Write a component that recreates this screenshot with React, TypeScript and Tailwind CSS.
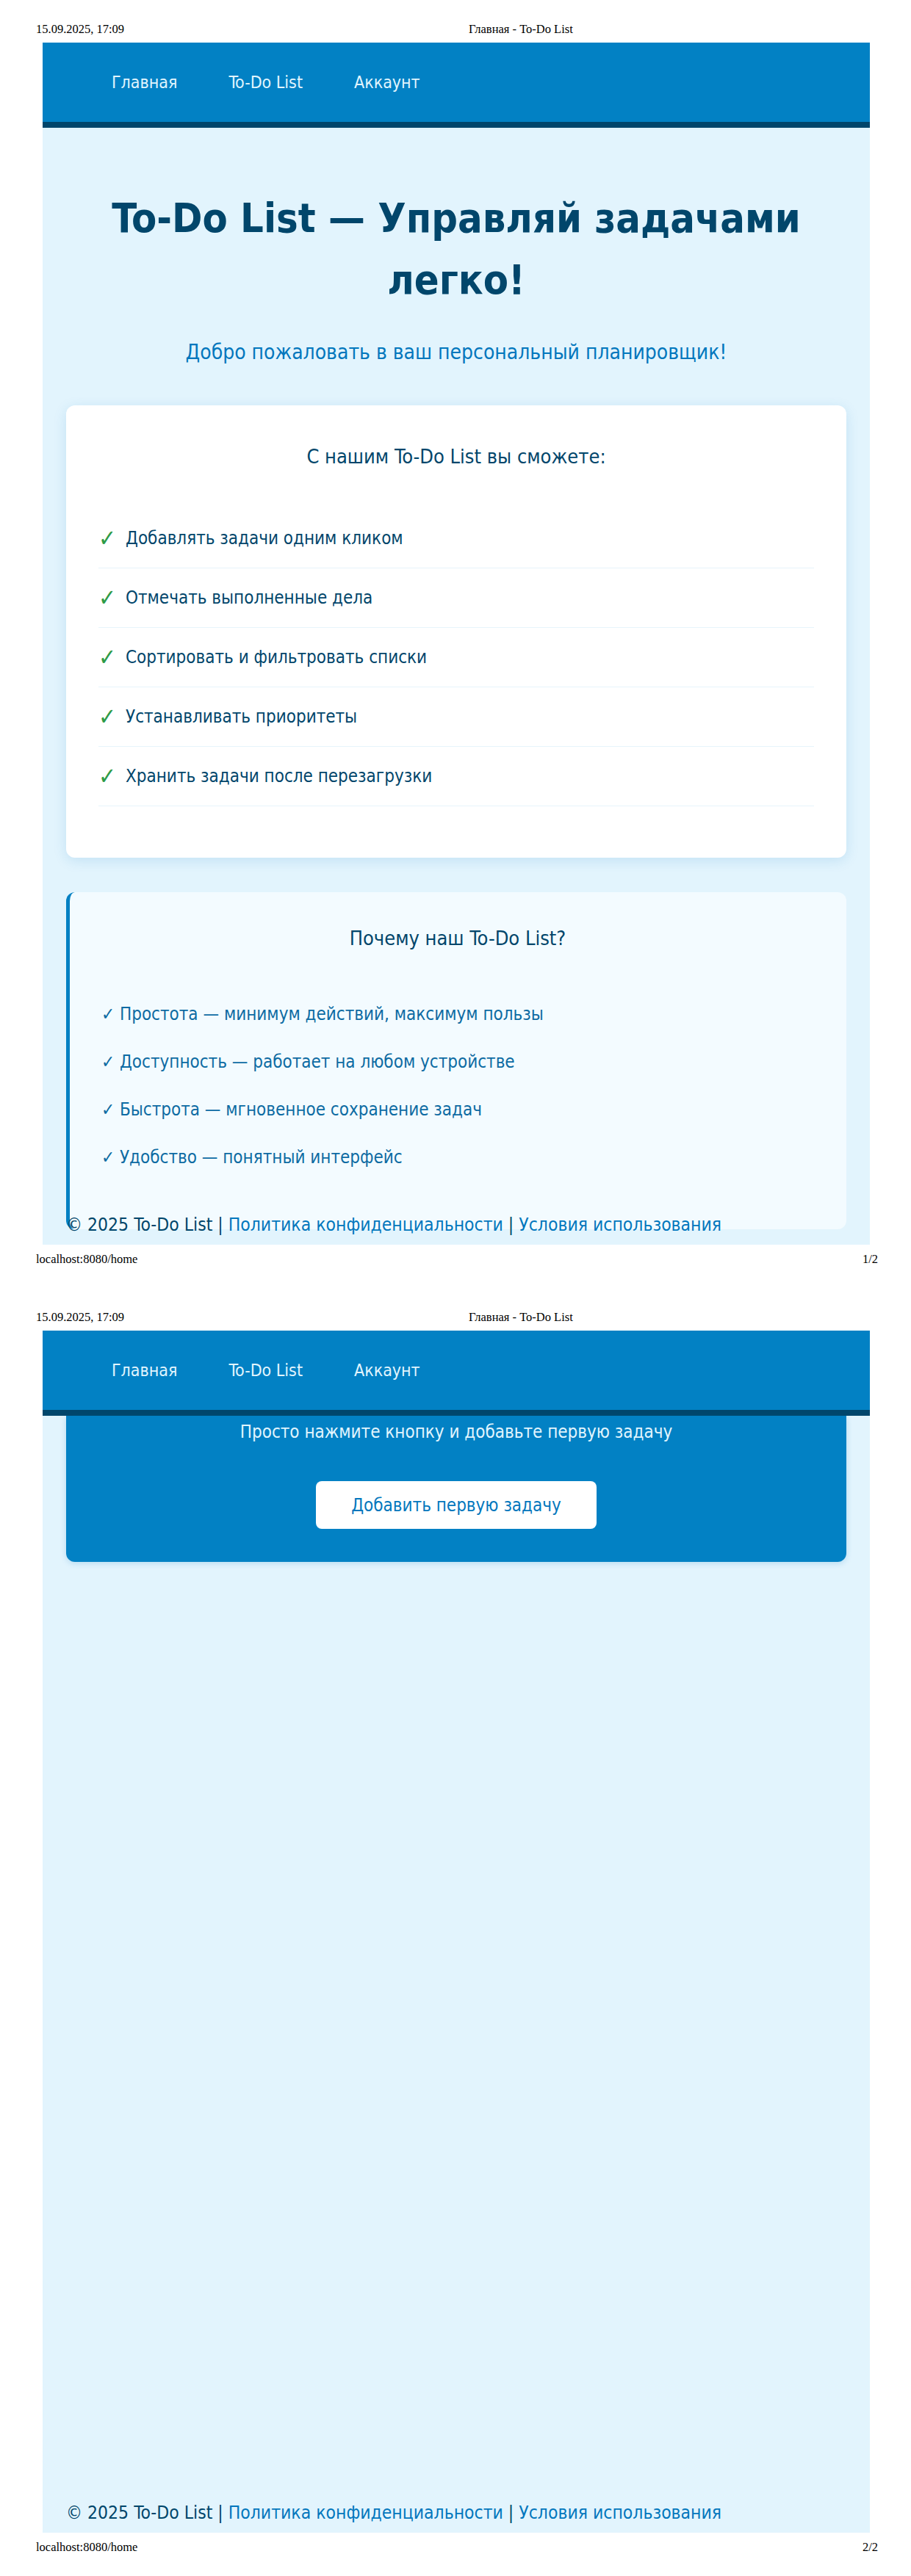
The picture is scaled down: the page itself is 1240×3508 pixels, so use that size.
const sans = "font-['DejaVu_Sans_Condensed','Liberation_Sans_Narrow','Liberation_Sans',sans-serif]";

const features = [
  "Добавлять задачи одним кликом",
  "Отмечать выполненные дела",
  "Сортировать и фильтровать списки",
  "Устанавливать приоритеты",
  "Хранить задачи после перезагрузки",
];

const reasons = [
  "Простота — минимум действий, максимум пользы",
  "Доступность — работает на любом устройстве",
  "Быстрота — мгновенное сохранение задач",
  "Удобство — понятный интерфейс",
];

function Nav() {
  return (
    <nav className="h-[116px] bg-[#0281c4] border-b-8 border-[#01466b] flex items-center pl-[94px] gap-[70px] text-[23px] text-[#e1f5fe]">
      <a>Главная</a>
      <a>To-Do List</a>
      <a>Аккаунт</a>
    </nav>
  );
}

function Footer() {
  return (
    <footer className="absolute left-8 bottom-[9px] text-[24.5px] leading-[36px] text-[#01466b]">
      © 2025 To-Do List | <a className="text-[#0277bd]">Политика конфиденциальности</a> |{" "}
      <a className="text-[#0277bd]">Условия использования</a>
    </footer>
  );
}

function PrintPage({ num, children }: { num: number; children: React.ReactNode }) {
  return (
    <div className="h-[1754px] flex flex-col bg-white">
      <div className="h-[58px] pt-[31px] pl-[49px] flex font-['Liberation_Serif',serif] text-[16.5px] leading-[18px] text-black">
        <span className="w-[589px]">15.09.2025, 17:09</span>
        <span>Главная - To-Do List</span>
      </div>
      <div className={`relative ml-[58px] w-[1126px] h-[1637px] overflow-hidden bg-[#e2f4fd] ${sans}`}>
        <Nav />
        {children}
        <Footer />
      </div>
      <div className="pt-[11px] pl-[49px] pr-[45px] flex justify-between font-['Liberation_Serif',serif] text-[16.5px] leading-[18px] text-black">
        <span>localhost:8080/home</span>
        <span>{num}/2</span>
      </div>
    </div>
  );
}

export default function App() {
  return (
    <div className="w-[1240px] bg-white">
      <PrintPage num={1}>
        <main className="px-8">
          <h1 className="mt-[81px] text-center text-[55.5px] leading-[84px] font-bold text-[#01466b] px-10">
            To-Do List — Управляй задачами легко!
          </h1>
          <p className="mt-[36px] text-center text-[28px] leading-[42px] text-[#0277bd]">
            Добро пожаловать в ваш персональный планировщик!
          </p>

          <section className="mt-[51px] bg-white rounded-xl px-[44px] pt-[50px] pb-[70px] shadow-[0_4px_18px_rgba(2,119,189,0.14)]">
            <h2 className="text-center text-[27px] leading-[39px] text-[#01466b]">
              С нашим To-Do List вы сможете:
            </h2>
            <ul className="mt-[52px]">
              {features.map((f) => (
                <li
                  key={f}
                  className="pt-[22px] pb-[22px] border-b border-[#e6f4fb] flex items-center gap-[9px] text-[24px] leading-[36px] text-[#01466b]"
                >
                  <span className="text-[#2e9b47] font-bold text-[32px] leading-[36px] w-[28px]">✓</span>
                  {f}
                </li>
              ))}
            </ul>
          </section>

          <section className="mt-[47px] bg-[#f3fbff] rounded-xl border-l-[5px] border-[#0280c3] pl-[43px] pr-[44px] pt-[43px] pb-[66px]">
            <h2 className="text-center text-[27px] leading-[39px] text-[#01466b]">
              Почему наш To-Do List?
            </h2>
            <ul className="mt-[51px]">
              {reasons.map((r) => (
                <li key={r} className="py-[14.5px] text-[24px] leading-[36px] text-[#0d6ba3]">
                  ✓ {r}
                </li>
              ))}
            </ul>
          </section>
        </main>
      </PrintPage>

      <PrintPage num={2}>
        <main className="px-8">
          <section className="bg-[#0281c4] rounded-b-xl pt-[4px] pb-[45px] flex flex-col items-center shadow-[0_2px_8px_rgba(2,119,189,0.2)]">
            <p className="text-[24px] leading-[36px] text-[#e1f5fe]">
              Просто нажмите кнопку и добавьте первую задачу
            </p>
            <button className="mt-[49px] w-[382px] h-[65px] bg-white rounded-lg text-[24px] text-[#0277bd]">
              Добавить первую задачу
            </button>
          </section>
        </main>
      </PrintPage>
    </div>
  );
}
